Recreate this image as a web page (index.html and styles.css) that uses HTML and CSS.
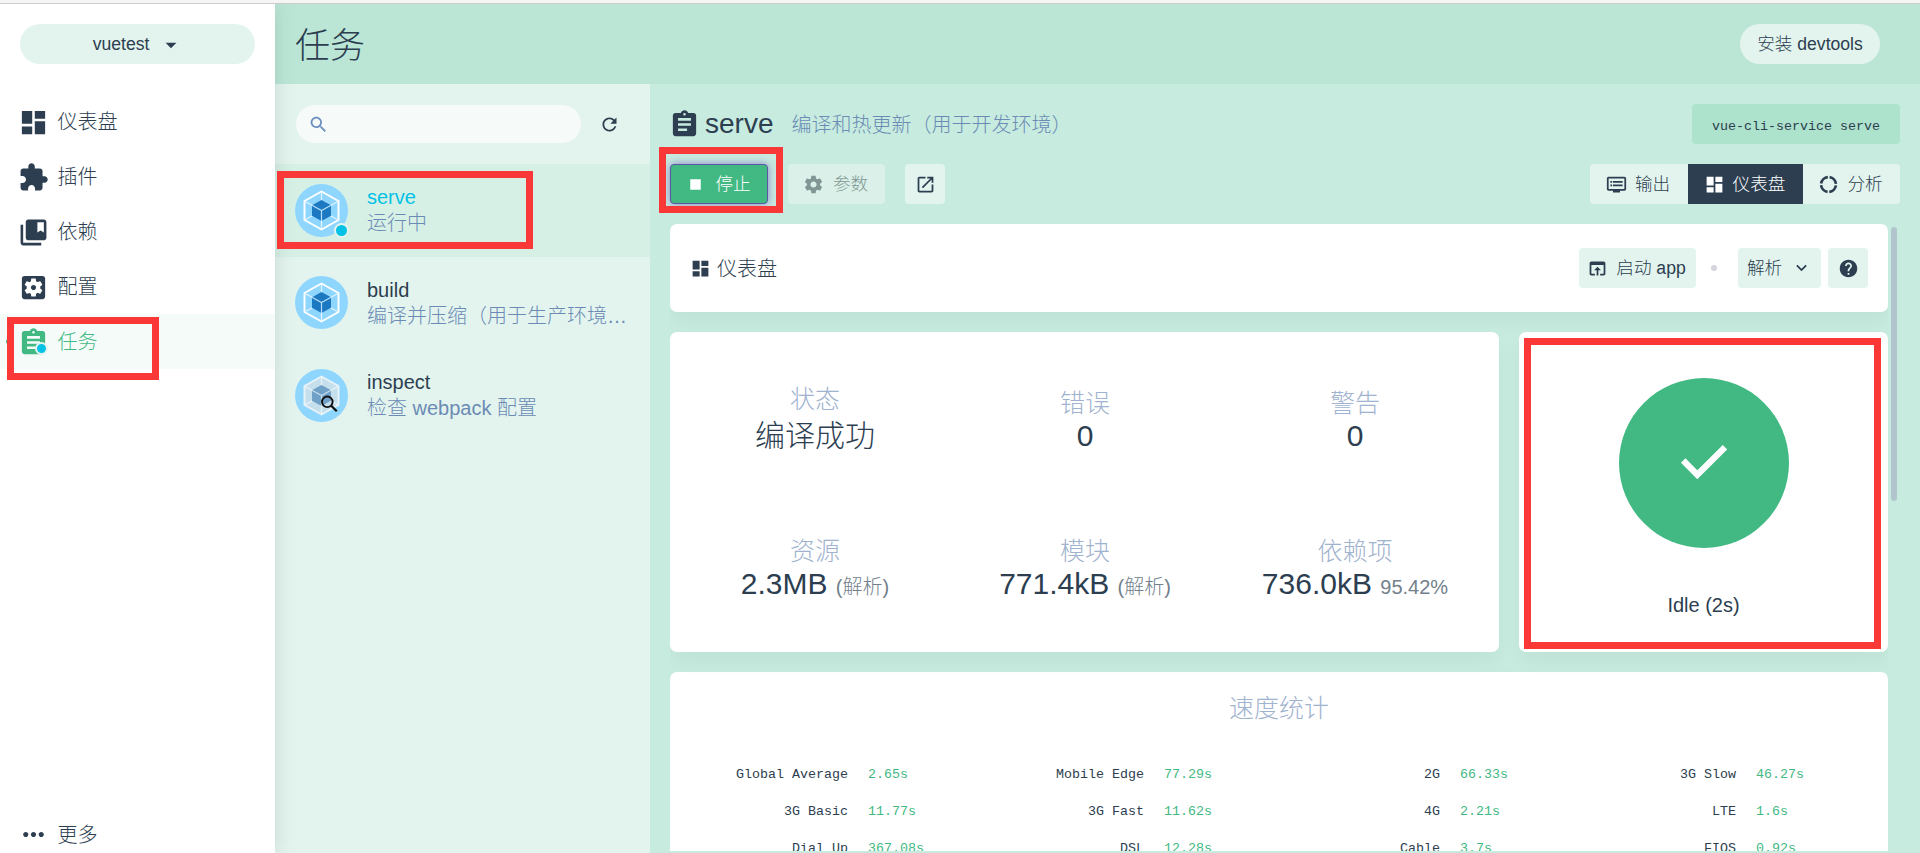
FILE: index.html
```html
<!DOCTYPE html>
<html lang="zh-CN">
<head>
  <meta charset="UTF-8">
  <meta name="viewport" content="width=device-width, initial-scale=1.0">
  <title>任务</title>
  <link rel="stylesheet" href="styles.css">
</head>
<body>
  <svg width="0" height="0" class="sprite">
    <symbol id="dashboard" viewBox="0 0 24 24"><path d="M3 13h8V3H3v10zm0 8h8v-6H3v6zm10 0h8V11h-8v10zm0-18v6h8V3h-8z"/></symbol>
    <symbol id="extension" viewBox="0 0 24 24"><path d="M20.500 11H19V7c0-1.100-.9-2-2-2h-4V3.500C13 2.120 11.880 1 10.500 1S8 2.120 8 3.500V5H4c-1.100 0-1.990.9-1.990 2v3.800H3.500c1.490 0 2.700 1.210 2.700 2.700s-1.210 2.700-2.700 2.700H2V20c0 1.100.9 2 2 2h3.800v-1.500c0-1.490 1.210-2.700 2.700-2.700 1.490 0 2.700 1.210 2.700 2.700V22H17c1.100 0 2-.9 2-2v-4h1.500c1.380 0 2.500-1.120 2.500-2.500S21.880 11 20.500 11z"/></symbol>
    <symbol id="books" viewBox="0 0 24 24"><path d="M4 6H2v14c0 1.100.9 2 2 2h14v-2H4V6z"/><path d="M20 2H8c-1.100 0-2 .9-2 2v12c0 1.100.9 2 2 2h12c1.100 0 2-.9 2-2V4c0-1.100-.9-2-2-2zm0 10l-2.500-1.500L15 12V4h5v8z"/></symbol>
    <symbol id="config" viewBox="0 0 24 24"><path d="M12 10c-1.100 0-2 .9-2 2s.9 2 2 2 2-.9 2-2-.9-2-2-2zm7-7H5c-1.110 0-2 .9-2 2v14c0 1.100.89 2 2 2h14c1.110 0 2-.9 2-2V5c0-1.100-.89-2-2-2zm-1.750 9c0 .23-.02.46-.05.680l1.480 1.160c.13.11.17.3.08.45l-1.400 2.420c-.09.15-.27.21-.43.15l-1.740-.7c-.36.28-.76.51-1.180.69l-.26 1.850c-.03.17-.18.3-.35.3h-2.800c-.17 0-.32-.13-.35-.29l-.26-1.850c-.43-.18-.82-.41-1.180-.69l-1.740.7c-.16.06-.34 0-.43-.15l-1.400-2.420c-.09-.15-.05-.34.08-.45l1.480-1.160c-.03-.23-.05-.46-.05-.69 0-.23.02-.46.05-.68l-1.480-1.160c-.13-.11-.17-.3-.08-.45l1.400-2.420c.09-.15.27-.21.43-.15l1.740.7c.36-.28.76-.51 1.180-.69l.26-1.850c.03-.17.18-.3.35-.3h2.800c.17 0 .32.13.35.29l.26 1.850c.43.18.82.41 1.180.69l1.740-.7c.16-.06.34 0 .43.15l1.400 2.420c.09.15.05.34-.08.45l-1.480 1.160c.03.23.05.46.05.69z"/></symbol>
    <symbol id="task" viewBox="0 0 24 24"><path d="M19 3h-4.180C14.400 1.840 13.300 1 12 1c-1.300 0-2.400.84-2.820 2H5c-1.100 0-2 .9-2 2v14c0 1.100.9 2 2 2h14c1.100 0 2-.9 2-2V5c0-1.100-.9-2-2-2zm-7 0c.55 0 1 .45 1 1s-.45 1-1 1-1-.45-1-1 .45-1 1-1zm2 14H7v-2h7v2zm3-4H7v-2h10v2zm0-4H7V7h10v2z"/></symbol>
    <symbol id="more" viewBox="0 0 24 24"><path d="M6 10c-1.100 0-2 .9-2 2s.9 2 2 2 2-.9 2-2-.9-2-2-2zm12 0c-1.100 0-2 .9-2 2s.9 2 2 2 2-.9 2-2-.9-2-2-2zm-6 0c-1.100 0-2 .9-2 2s.9 2 2 2 2-.9 2-2-.9-2-2-2z"/></symbol>
    <symbol id="arrow" viewBox="0 0 24 24"><path d="M7 10l5 5 5-5z"/></symbol>
    <symbol id="chevron" viewBox="0 0 24 24"><path d="M7.410 7.840L12 12.420l4.590-4.580L18 9.250l-6 6-6-6z"/></symbol>
    <symbol id="search" viewBox="0 0 24 24"><path d="M15.500 14h-.79l-.28-.27C15.410 12.590 16 11.110 16 9.500 16 5.910 13.090 3 9.500 3S3 5.910 3 9.500 5.910 16 9.500 16c1.610 0 3.090-.59 4.230-1.570l.27.28v.79l5 4.990L20.490 19l-4.990-5zm-6 0C7.010 14 5 11.990 5 9.500S7.010 5 9.500 5 14 7.010 14 9.500 11.990 14 9.500 14z"/></symbol>
    <symbol id="refresh" viewBox="0 0 24 24"><path d="M17.650 6.350C16.200 4.900 14.210 4 12 4c-4.420 0-7.990 3.580-7.990 8s3.570 8 7.990 8c3.730 0 6.840-2.550 7.730-6h-2.080c-.82 2.330-3.040 4-5.650 4-3.310 0-6-2.690-6-6s2.690-6 6-6c1.660 0 3.140.69 4.220 1.780L13 11h7V4l-2.350 2.350z"/></symbol>
    <symbol id="stop" viewBox="0 0 24 24"><path d="M6 6h12v12H6z"/></symbol>
    <symbol id="gear" viewBox="0 0 24 24"><path d="M19.430 12.980c.04-.32.07-.64.07-.98s-.03-.66-.07-.98l2.110-1.650c.19-.15.24-.42.12-.64l-2-3.460c-.12-.22-.39-.3-.61-.22l-2.490 1c-.52-.4-1.080-.73-1.690-.98l-.38-2.650C14.460 2.180 14.250 2 14 2h-4c-.25 0-.46.18-.49.42l-.38 2.650c-.61.25-1.170.59-1.690.98l-2.490-1c-.23-.09-.49 0-.61.22l-2 3.460c-.13.22-.07.49.12.64l2.110 1.650c-.04.32-.07.65-.07.98s.03.66.07.98l-2.110 1.650c-.19.15-.24.42-.12.64l2 3.460c.12.22.39.3.61.22l2.490-1c.52.4 1.080.73 1.690.98l.38 2.650c.03.24.24.42.49.42h4c.25 0 .46-.18.49-.42l.38-2.650c.61-.25 1.170-.59 1.690-.98l2.490 1c.23.09.49 0 .61-.22l2-3.460c.12-.22.07-.49-.12-.64l-2.110-1.650zM12 15.500c-1.930 0-3.500-1.570-3.500-3.500s1.570-3.500 3.500-3.500 3.500 1.570 3.500 3.500-1.570 3.500-3.500 3.500z"/></symbol>
    <symbol id="open" viewBox="0 0 24 24"><path d="M19 19H5V5h7V3H5c-1.110 0-2 .9-2 2v14c0 1.100.89 2 2 2h14c1.100 0 2-.9 2-2v-7h-2v7zM14 3v2h3.590l-9.830 9.830 1.410 1.410L19 6.410V10h2V3h-7z"/></symbol>
    <symbol id="output" viewBox="0 0 24 24"><path d="M21 3H3c-1.100 0-2 .9-2 2v12c0 1.100.9 2 2 2h5v2h8v-2h5c1.100 0 1.990-.9 1.990-2L23 5c0-1.100-.9-2-2-2zm0 14H3V5h18v12zm-2-9H8v2h11V8zm0 4H8v2h11v-2zM7 8H5v2h2V8zm0 4H5v2h2v-2z"/></symbol>
    <symbol id="donut" viewBox="0 0 24 24"><circle cx="12" cy="12" r="8.500" fill="none" stroke="currentColor" stroke-width="3" stroke-dasharray="11.350 2" stroke-dashoffset="-1"/></symbol>
    <symbol id="launch" viewBox="0 0 24 24"><path d="M19 4H5c-1.110 0-2 .9-2 2v12c0 1.100.89 2 2 2h4v-2H5V8h14v10h-4v2h4c1.100 0 2-.9 2-2V6c0-1.100-.89-2-2-2zm-7 6l-4 4h3v6h2v-6h3l-4-4z"/></symbol>
    <symbol id="help" viewBox="0 0 24 24"><path d="M12 2C6.480 2 2 6.480 2 12s4.480 10 10 10 10-4.480 10-10S17.520 2 12 2zm1 17h-2v-2h2v2zm2.070-7.750l-.9.920C13.450 12.900 13 13.500 13 15h-2v-.5c0-1.100.45-2.100 1.170-2.830l1.240-1.260c.37-.36.59-.86.59-1.410 0-1.100-.9-2-2-2s-2 .9-2 2H8c0-2.210 1.790-4 4-4s4 1.790 4 4c0 .88-.36 1.680-.93 2.250z"/></symbol>
    <symbol id="check" viewBox="0 0 64 64"><path d="M11.200 29.500l14.100 14.300L53 16.300" fill="none" stroke="#fff" stroke-width="6.200"/></symbol>
    <symbol id="webpack" viewBox="0 0 53 53">
      <circle cx="26.500" cy="26.500" r="26.500" fill="#8fd6ff"/>
      <path d="M26.500 7.500L43.500 17v19L26.500 45.500 9.500 36V17z" fill="none" stroke="#fff" stroke-width="1.900"/>
      <path d="M26.500 8v9M26.500 36v9M10 17.500l7.500 4M43 17.500l-7.500 4M10 35.700l7.500-4M43 35.700l-7.500-4" stroke="#dff3ff" stroke-width="1.300"/>
      <path d="M26.500 16l9.500 5.200v10.600L26.500 37 17 31.800V21.200z" fill="#1c78c0"/>
      <path d="M17 21.200l9.500 5.300 9.500-5.300M26.500 26.500V37" fill="none" stroke="#b5dffa" stroke-width="1.200"/>
    </symbol>
    <symbol id="webpack-inspect" viewBox="0 0 53 53">
      <circle cx="26.500" cy="26.500" r="26.500" fill="#8fd6ff"/>
      <path d="M26.500 7.500L43.500 17v19L26.500 45.500 9.500 36V17z" fill="#c5dfec" stroke="#e8f3f8" stroke-width="1.900"/>
      <path d="M26.500 8v9M26.500 36v9M10 17.500l7.500 4M43 17.500l-7.500 4M10 35.700l7.500-4M43 35.700l-7.500-4" stroke="#e8f3f8" stroke-width="1.300"/>
      <path d="M26.500 16l9.500 5.200v10.600L26.500 37 17 31.800V21.200z" fill="#709fc7"/>
      <path d="M17 21.200l9.500 5.300 9.500-5.300M26.500 26.500V37" fill="none" stroke="#c5dcec" stroke-width="1.200"/>
      <circle cx="32.300" cy="32.800" r="5.300" fill="none" stroke="#111" stroke-width="1.900"/>
      <path d="M36.200 36.700l5.600 5.600" stroke="#111" stroke-width="2.300"/>
    </symbol>
  </svg>

  <div class="window-edge"></div>
  <div class="app">
    <aside class="sidebar">
      <button class="project">vuetest <svg class="icon"><use href="#arrow"/></svg></button>
      <nav class="nav">
        <a class="nav-item"><svg class="icon icon-big"><use href="#dashboard"/></svg>仪表盘</a>
        <a class="nav-item"><svg class="icon icon-big"><use href="#extension"/></svg>插件</a>
        <a class="nav-item"><svg class="icon icon-big"><use href="#books"/></svg>依赖</a>
        <a class="nav-item"><svg class="icon icon-big"><use href="#config"/></svg>配置</a>
        <a class="nav-item active"><svg class="icon icon-big"><use href="#task"/></svg>任务<span class="badge nav-badge"></span></a>
      </nav>
      <a class="nav-item nav-more"><svg class="icon icon-big"><use href="#more"/></svg>更多</a>
    </aside>

    <main class="view">
      <header class="header">
        <h1>任务</h1>
        <button class="round">安装 devtools</button>
      </header>

      <div class="panes">
        <section class="tasks">
          <div class="tools">
            <div class="search"><svg class="icon"><use href="#search"/></svg></div>
            <svg class="icon refresh"><use href="#refresh"/></svg>
          </div>
          <div class="task selected">
            <div class="logo"><svg><use href="#webpack"/></svg><span class="badge"></span></div>
            <div class="info"><div class="name">serve</div><div class="desc">运行中</div></div>
          </div>
          <div class="task">
            <div class="logo"><svg><use href="#webpack"/></svg></div>
            <div class="info"><div class="name">build</div><div class="desc">编译并压缩（用于生产环境…</div></div>
          </div>
          <div class="task">
            <div class="logo"><svg><use href="#webpack-inspect"/></svg></div>
            <div class="info"><div class="name">inspect</div><div class="desc">检查 webpack 配置</div></div>
          </div>
        </section>

        <section class="detail">
          <div class="title-row">
            <svg class="icon icon-big"><use href="#task"/></svg>
            <h2>serve</h2>
            <span class="desc">编译和热更新（用于开发环境）</span>
            <code class="command">vue-cli-service serve</code>
          </div>

          <div class="actions">
            <button class="stop"><svg class="icon"><use href="#stop"/></svg>停止</button>
            <button class="params"><svg class="icon"><use href="#gear"/></svg>参数</button>
            <button class="square"><svg class="icon"><use href="#open"/></svg></button>
            <div class="tabs">
              <button class="tab-output"><svg class="icon"><use href="#output"/></svg>输出</button>
              <button class="tab-dashboard"><svg class="icon"><use href="#dashboard"/></svg>仪表盘</button>
              <button class="tab-analyze"><svg class="icon"><use href="#donut"/></svg>分析</button>
            </div>
          </div>

          <div class="scroll">
            <div class="card toolbar">
              <svg class="icon"><use href="#dashboard"/></svg>
              <span class="toolbar-title">仪表盘</span>
              <button class="launch"><svg class="icon"><use href="#launch"/></svg>启动 app</button>
              <span class="dot"></span>
              <button class="select">解析<svg class="icon"><use href="#chevron"/></svg></button>
              <button class="square"><svg class="icon"><use href="#help"/></svg></button>
            </div>

            <div class="row">
              <div class="card stats">
                <div class="stat status"><div class="label">状态</div><div class="value">编译成功</div></div>
                <div class="stat"><div class="label">错误</div><div class="value">0</div></div>
                <div class="stat"><div class="label">警告</div><div class="value">0</div></div>
                <div class="stat"><div class="label">资源</div><div class="value">2.3MB <small>(解析)</small></div></div>
                <div class="stat"><div class="label">模块</div><div class="value">771.4kB <small>(解析)</small></div></div>
                <div class="stat"><div class="label">依赖项</div><div class="value">736.0kB <small>95.42%</small></div></div>
              </div>
              <div class="card progress">
                <div class="circle"><svg><use href="#check"/></svg></div>
                <div class="idle">Idle (2s)</div>
              </div>
            </div>

            <div class="card speed">
              <div class="label">速度统计</div>
              <div class="speeds">
                <span>Global Average</span><b>2.65s</b>
                <span>Mobile Edge</span><b>77.29s</b>
                <span>2G</span><b>66.33s</b>
                <span>3G Slow</span><b>46.27s</b>
                <span>3G Basic</span><b>11.77s</b>
                <span>3G Fast</span><b>11.62s</b>
                <span>4G</span><b>2.21s</b>
                <span>LTE</span><b>1.6s</b>
                <span>Dial Up</span><b>367.08s</b>
                <span>DSL</span><b>12.28s</b>
                <span>Cable</span><b>3.7s</b>
                <span>FIOS</span><b>0.92s</b>
              </div>
            </div>
          </div>
        </section>
      </div>
    </main>
  </div>

  <div class="scrollbar"></div>

  <!-- highlights -->
  <div class="mark mark-nav"></div>
  <div class="mark mark-task"></div>
  <div class="mark mark-stop"></div>
  <div class="mark mark-idle"></div>
</body>
</html>
```
FILE: styles.css
```css
* {
  box-sizing: border-box;
}

body {
  margin: 0;
  height: 853px;
  overflow: hidden;
  position: relative;
  font-family: "Liberation Sans", "Noto Sans CJK SC", sans-serif;
  font-size: 20px;
  font-weight: 300;
  line-height: 26px;
  color: #2c3e50;
  background: #c7ebdf;
}

.sprite {
  position: absolute;
}

h1, h2 {
  margin: 0;
  font-weight: 300;
}

.icon {
  width: 21px;
  height: 21px;
  flex: none;
  fill: currentColor;
}

.icon-big {
  width: 31px;
  height: 31px;
}

button {
  display: flex;
  align-items: center;
  justify-content: center;
  height: 40px;
  padding: 0 2px 3px 0;
  border: none;
  border-radius: 4px;
  background: #e3f4ee;
  color: #2c3e50;
  font-family: inherit;
  font-size: 17.6px;
  font-weight: 300;
  white-space: nowrap;
}

button .icon {
  margin-top: 3px;
}

.window-edge {
  position: relative;
  z-index: 2;
  height: 4px;
  background: #f5f5f5;
  border-bottom: 1px solid #ccc;
}

.app {
  display: flex;
  height: 849px;
}

/* sidebar */
.sidebar {
  width: 275px;
  flex: none;
  display: flex;
  flex-direction: column;
  background: #fff;
  box-shadow: 0 0 20px rgba(0, 0, 0, 0.12);
  z-index: 1;
}

.project {
  margin: 20px 20px 30px;
  padding: 0;
  border-radius: 20px;
  gap: 9px;
}

.project .icon {
  width: 26px;
  height: 26px;
  margin: 2px -2px 0 0;
}

.nav-item {
  position: relative;
  display: flex;
  align-items: center;
  gap: 9px;
  height: 55px;
  padding: 1px 0 0 17.5px;
}

.nav-item.active {
  color: #42b983;
  background: #f5fbf9;
}

.nav-item.active::before {
  content: "";
  position: absolute;
  left: 6px;
  top: 25px;
  width: 5px;
  height: 5px;
  border-radius: 50%;
  background: #42b983;
}

.nav-more {
  margin-top: auto;
  height: 38px;
}

.badge {
  position: absolute;
  right: -1px;
  bottom: -1px;
  width: 15px;
  height: 15px;
  border: 2px solid #e3f4ee;
  border-radius: 50%;
  background: #03c2e6;
}

.nav-badge {
  width: 13px;
  height: 13px;
  left: 35px;
  top: 28px;
}

/* header */
.view {
  flex: 1;
  display: flex;
  flex-direction: column;
}

.header {
  height: 80px;
  flex: none;
  display: flex;
  align-items: center;
  justify-content: space-between;
  padding: 0 40px 0 20px;
  background: #bbe6d6;
}

.header h1 {
  padding-top: 4px;
  font-size: 35px;
  line-height: 50px;
}

.round {
  width: 140px;
  padding-right: 0;
  border-radius: 20px;
}

.panes {
  flex: 1;
  display: flex;
  min-height: 0;
}

/* task list */
.tasks {
  width: 375px;
  flex: none;
  background: #e3f4ee;
}

.tools {
  display: flex;
  align-items: center;
  height: 80px;
  padding: 0 30px 0 21px;
}

.search {
  width: 286px;
  height: 38px;
  display: flex;
  align-items: center;
  padding-left: 12px;
  border-radius: 19px;
  background: #f6fbfa;
  color: #6c8ebf;
}

.refresh {
  margin-left: 18px;
}

.task {
  display: flex;
  align-items: center;
  gap: 19px;
  height: 92.5px;
  padding: 0 18px 0 20px;
}

.task.selected {
  background: #d7f0e5;
}

.task.selected .name {
  color: #03c2e6;
}

.logo {
  position: relative;
  width: 53px;
  height: 53px;
  flex: none;
}

.logo svg {
  display: block;
  width: 53px;
  height: 53px;
}

.info {
  min-width: 0;
}

.desc {
  color: #6b8bb5;
  white-space: nowrap;
}

/* detail */
.detail {
  flex: 1;
  padding: 20px 20px 2px;
  display: flex;
  flex-direction: column;
}

.title-row {
  display: flex;
  align-items: center;
  height: 40px;
  flex: none;
}

.title-row .icon {
  margin-left: -1px;
}

.title-row h2 {
  margin: 0 18px 0 5px;
  font-size: 28px;
}

.title-row .desc {
  padding-top: 2px;
}

.command {
  margin-left: auto;
  width: 208px;
  height: 40px;
  line-height: 45px;
  text-align: center;
  border-radius: 4px;
  background: #ade2cc;
  font-family: "Liberation Mono", monospace;
  font-size: 13.33px;
}

.actions {
  display: flex;
  margin: 20px 0;
  flex: none;
}

.stop {
  width: 98px;
  gap: 9px;
  margin-right: 20px;
  border: 1px solid #5a55a5;
  background: #42b983;
  color: #fff;
  box-shadow: 0 0 8px #8a80c8;
}

.params {
  width: 97px;
  gap: 9px;
  margin-right: 20px;
  background: #daf0e8;
  color: #7f9694;
}

.square {
  width: 40px;
  padding-right: 0;
}

.tabs {
  display: flex;
  margin-left: auto;
}

.tabs button {
  gap: 8px;
  border-radius: 0;
}

.tabs .tab-output {
  width: 98px;
  border-radius: 4px 0 0 4px;
}

.tabs .tab-dashboard {
  width: 115px;
  background: #2c3e50;
  color: #fff;
}

.tabs .tab-analyze {
  width: 97px;
  border-radius: 0 4px 4px 0;
}

.scroll {
  flex: 1;
  min-height: 0;
  width: 1218px;
  overflow: hidden;
}

.card {
  background: #fff;
  border-radius: 7px;
  box-shadow: 0 10px 20px rgba(0, 0, 0, 0.04);
}

.toolbar {
  display: flex;
  align-items: center;
  height: 88px;
  padding: 0 20px;
}

.toolbar-title {
  margin: 0 auto 0 6px;
  padding-top: 2px;
}

.launch {
  width: 117px;
  gap: 8px;
}

.dot {
  width: 6px;
  height: 6px;
  margin: 0 21px 0 15px;
  border-radius: 50%;
  background: #d5d5de;
}

.select {
  width: 83px;
  gap: 9px;
  margin-right: 7px;
  padding-right: 0;
}

.row {
  display: flex;
  gap: 20px;
  margin: 20px 0;
}

.stats {
  width: 829px;
  height: 320px;
  padding: 10px;
  display: grid;
  grid-template-columns: repeat(3, 270px);
  grid-template-rows: 150px 150px;
}

.stat {
  display: flex;
  flex-direction: column;
  align-items: center;
  justify-content: center;
  padding-top: 5px;
}

.label {
  font-size: 25px;
  line-height: 32px;
  color: #9fb3cf;
}

.value {
  font-size: 30px;
  line-height: 34px;
}

.status .value {
  line-height: 41px;
}

.value small {
  font-size: 20px;
  color: #727f8c;
}

.progress {
  flex: 1;
  display: flex;
  flex-direction: column;
  align-items: center;
  padding-top: 46px;
}

.circle {
  width: 170px;
  height: 170px;
  display: flex;
  align-items: center;
  justify-content: center;
  border-radius: 50%;
  background: #42b983;
}

.circle svg {
  width: 64px;
  height: 64px;
}

.idle {
  margin-top: 44px;
}

.speed {
  padding: 20px 17px;
}

.speed .label {
  text-align: center;
}

.speeds {
  display: grid;
  grid-template-columns: repeat(4, 161px 95px);
  column-gap: 20px;
  grid-auto-rows: 37px;
  align-items: center;
  margin-top: 32px;
  font-family: "Liberation Mono", monospace;
  font-size: 13.33px;
}

.speeds span {
  text-align: right;
}

.speeds b {
  font-weight: normal;
  color: #42b983;
}

.scrollbar {
  position: absolute;
  left: 1891px;
  top: 227px;
  width: 6px;
  height: 274px;
  border-radius: 3px;
  background: #b1c5cf;
}

/* highlight frames */
.mark {
  position: absolute;
  border: 7px solid #fb3838;
  z-index: 2;
}

.mark-nav {
  left: 7px;
  top: 317px;
  width: 152px;
  height: 63px;
}

.mark-task {
  left: 277px;
  top: 171px;
  width: 256px;
  height: 78px;
}

.mark-stop {
  left: 659px;
  top: 147px;
  width: 124px;
  height: 66px;
}

.mark-idle {
  left: 1524px;
  top: 338px;
  width: 357px;
  height: 311px;
}
```
